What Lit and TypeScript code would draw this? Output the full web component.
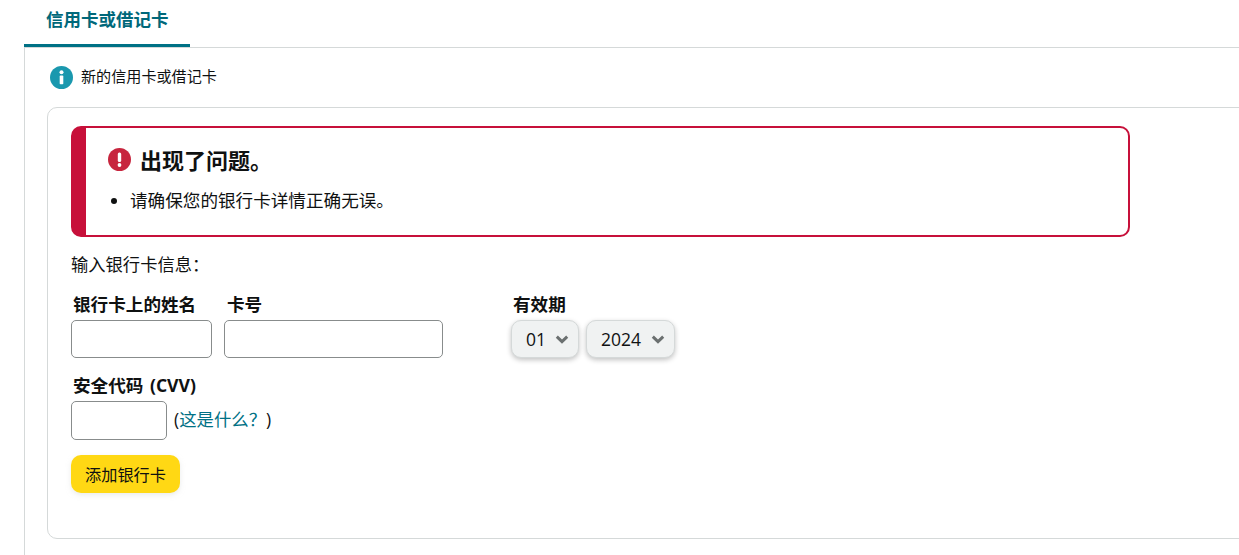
import { LitElement, html, css } from "lit";
import { customElement } from "lit/decorators.js";

@customElement("app-root")
export class AppRoot extends LitElement {
  static styles = css`
    :host {
      display: block;
      width: 1239px;
      height: 555px;
      overflow: hidden;
      background: #fff;
      color: #0f1111;
      font-family: "Open Sans", "Noto Sans CJK SC", sans-serif;
      font-size: 16px;
    }
    .page { padding-left: 24px; }
    .tabs { display: flex; height: 47px; border-bottom: 1px solid #d5d9d9; }
    .tab {
      width: 166px; height: 47px; box-sizing: border-box;
      padding: 7px 0 0 22px;
      border-bottom: 3px solid #007185;
      color: #00687a; font-size: 17.5px; font-weight: 700; line-height: 24px;
      white-space: nowrap;
    }
    .panel {
      width: 1300px; height: 507px; box-sizing: border-box;
      border-left: 1px solid #d5d9d9;
      padding: 17px 0 0 22px;
    }
    .info { display: flex; align-items: center; gap: 8px; height: 24px; margin-left: 3px; font-size: 15.1px; line-height: 20px; }
    .info svg { display: block; flex: none; }
    .info span { margin-top: -3px; }
    .card {
      margin-top: 18px; height: 432px; box-sizing: border-box;
      border: 1px solid #d5d9d9; border-radius: 10px;
      padding: 18px 0 0 23px;
    }
    .alert {
      width: 1059px; height: 111px; box-sizing: border-box;
      border: 2px solid #c7103a; border-left-width: 15px; border-radius: 10px;
      padding: 19px 0 0 22px;
    }
    .alert-head { display: flex; align-items: center; gap: 9px; height: 28px; }
    .alert-head svg { display: block; flex: none; margin-top: -4px; }
    .alert-title { font-size: 22px; font-weight: 700; line-height: 28px; margin-top: -2px; }
    ul { margin: 13px 0 0; padding: 0 0 0 22px; font-size: 17.6px; line-height: 24px; }
    .lead { margin-top: 16px; line-height: 24px; font-size: 17.3px; }
    .row { display: flex; margin-top: 16px; }
    .field { display: flex; flex-direction: column; }
    .field label { font-size: 17.6px; font-weight: 700; line-height: 22px; height: 27px; padding-left: 2px; white-space: nowrap; }
    .name { width: 141px; margin-right: 12px; }
    .number { width: 219px; margin-right: 68px; }
    .number label { padding-left: 3px; }
    input {
      display: block; box-sizing: border-box; width: 100%; height: 38px;
      border: 1px solid #888c8c; border-radius: 5px; background: #fff; padding: 0; margin: 0;
    }
    .selects { display: flex; gap: 7px; }
    .select {
      height: 38px; box-sizing: border-box; display: flex; align-items: center; justify-content: space-between;
      border: 1px solid #d5d9d9; border-radius: 10px; background: #f0f2f2;
      box-shadow: 0 2px 5px rgba(15, 17, 17, 0.25);
      font-size: 17.5px; padding: 0 9px 0 14px;
    }
    .select svg { display: block; }
    .month { width: 68px; }
    .year { width: 89px; }
    .cvv-block { margin-top: 16px; }
    .cvv-block label { display: block; font-size: 17.6px; font-weight: 700; line-height: 22px; height: 27px; padding-left: 2px; word-spacing: 2px; white-space: nowrap; }
    .cvv-row { display: flex; align-items: center; gap: 7px; font-size: 17.4px; line-height: 24px; }
    .cvv-row input { width: 96px; height: 39px; }
    .cvv-row span { margin-top: -3px; }
    a { color: #007185; text-decoration: none; }
    button {
      display: block; margin-top: 15px; width: 109px; height: 38px; padding: 0;
      border: none; border-radius: 10px; background: #ffd814; color: #0f1111;
      box-shadow: 0 2px 5px rgba(213, 217, 217, 0.5);
      font-family: inherit; font-size: 16.2px;
    }
  `;

  render() {
    return html`
      <div class="page">
        <div class="tabs"><div class="tab">信用卡或借记卡</div></div>
        <div class="panel">
          <div class="info">
            <svg width="23" height="23" viewBox="0 0 23 23">
              <circle cx="11.5" cy="11.5" r="11.5" fill="#1a98ae"></circle>
              <circle cx="11.5" cy="6.2" r="2" fill="#fff"></circle>
              <rect x="9.7" y="9.6" width="3.6" height="8.6" rx="0.8" fill="#fff"></rect>
            </svg>
            <span>新的信用卡或借记卡</span>
          </div>
          <div class="card">
            <div class="alert">
              <div class="alert-head">
                <svg width="23" height="23" viewBox="0 0 23 23">
                  <circle cx="11.5" cy="11.5" r="11.5" fill="#c7253e"></circle>
                  <rect x="9.8" y="4.5" width="3.4" height="9.4" rx="1.5" fill="#fff"></rect>
                  <circle cx="11.5" cy="17" r="1.9" fill="#fff"></circle>
                </svg>
                <span class="alert-title">出现了问题。</span>
              </div>
              <ul><li>请确保您的银行卡详情正确无误。</li></ul>
            </div>
            <div class="lead">输入银行卡信息：</div>
            <div class="row">
              <div class="field name"><label>银行卡上的姓名</label><input /></div>
              <div class="field number"><label>卡号</label><input /></div>
              <div class="field">
                <label>有效期</label>
                <div class="selects">
                  <div class="select month"><span>01</span>${this.chevron()}</div>
                  <div class="select year"><span>2024</span>${this.chevron()}</div>
                </div>
              </div>
            </div>
            <div class="cvv-block">
              <label>安全代码 (CVV)</label>
              <div class="cvv-row"><input /><span>(<a>这是什么？</a>)</span></div>
            </div>
            <button>添加银行卡</button>
          </div>
        </div>
      </div>
    `;
  }

  chevron() {
    return html`<svg width="14" height="9" viewBox="0 0 14 9"><path d="M1.8 1.6 L7 6.6 L12.2 1.6" fill="none" stroke="#6b7070" stroke-width="3"></path></svg>`;
  }
}
